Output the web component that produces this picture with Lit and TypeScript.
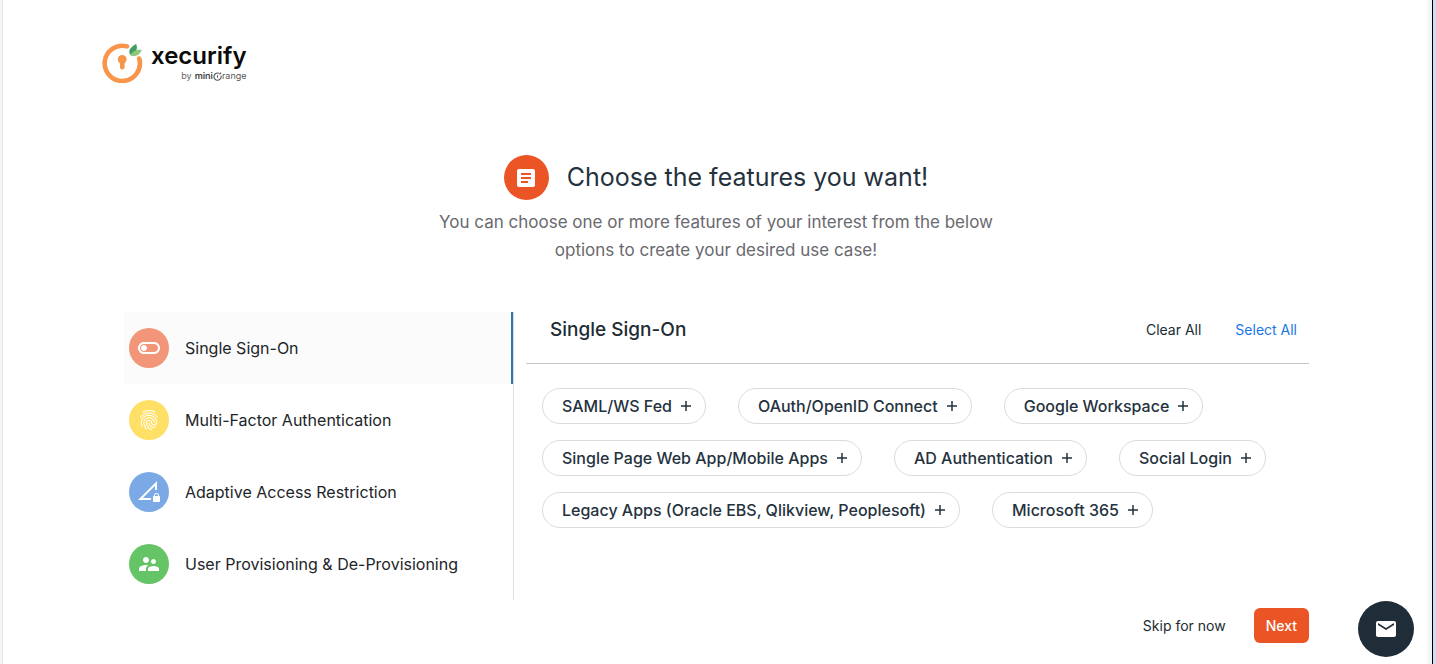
import { LitElement, html, svg, css } from "lit";
import { customElement, property, state } from "lit/decorators.js";

const icons = {
  toggle: svg`<path d="M17 6H7c-3.31 0-6 2.69-6 6s2.69 6 6 6h10c3.31 0 6-2.69 6-6s-2.69-6-6-6zm0 10H7c-2.21 0-4-1.79-4-4s1.790-4 4-4h10c2.210 0 4 1.790 4 4s-1.790 4-4 4zM7 9c-1.660 0-3 1.340-3 3s1.340 3 3 3 3-1.340 3-3-1.340-3-3-3z"/>`,
  fingerprint: svg`<path d="M17.81 4.47c-.08 0-.16-.02-.23-.06C15.66 3.42 14 3 12.01 3c-1.98 0-3.86.47-5.57 1.41-.24.13-.54.04-.68-.2-.13-.24-.04-.55.2-.68C7.82 2.52 9.86 2 12.01 2c2.13 0 3.99.47 6.03 1.52.25.13.34.43.21.67-.09.18-.26.28-.44.28zM3.5 9.72c-.1 0-.2-.03-.29-.09-.23-.16-.28-.47-.12-.7.99-1.4 2.25-2.5 3.75-3.27C9.98 4.04 14 4.03 17.15 5.65c1.5.77 2.76 1.86 3.75 3.25.16.22.11.54-.12.7-.23.16-.54.11-.7-.12-.9-1.26-2.04-2.25-3.39-2.94-2.87-1.47-6.54-1.47-9.4.01-1.36.7-2.5 1.7-3.4 2.96-.08.14-.23.21-.39.21zm6.25 12.07c-.13 0-.26-.05-.35-.15-.87-.87-1.34-1.43-2.01-2.64-.69-1.23-1.05-2.73-1.05-4.34 0-2.97 2.54-5.39 5.66-5.39s5.66 2.42 5.66 5.39c0 .28-.22.5-.5.5s-.5-.22-.5-.5c0-2.42-2.09-4.39-4.66-4.39-2.57 0-4.66 1.97-4.66 4.39 0 1.44.32 2.77.93 3.85.64 1.15 1.08 1.64 1.85 2.42.19.2.19.51 0 .71-.11.1-.24.15-.37.15zm7.17-1.85c-1.19 0-2.24-.3-3.1-.89-1.49-1.01-2.38-2.65-2.38-4.39 0-.28.22-.5.5-.5s.5.22.5.5c0 1.41.72 2.74 1.94 3.56.71.48 1.54.71 2.54.71.24 0 .64-.03 1.04-.1.27-.05.53.13.58.41.05.27-.13.53-.41.58-.57.11-1.07.12-1.21.12zM14.91 22c-.04 0-.09-.01-.13-.02-1.59-.44-2.63-1.03-3.72-2.1-1.4-1.39-2.17-3.24-2.17-5.22 0-1.62 1.38-2.94 3.08-2.94 1.7 0 3.08 1.32 3.08 2.94 0 1.07.93 1.94 2.08 1.94s2.08-.87 2.08-1.94c0-3.77-3.25-6.83-7.25-6.83-2.84 0-5.44 1.58-6.61 4.03-.39.81-.59 1.76-.59 2.8 0 .78.07 2.01.67 3.61.1.26-.03.55-.29.64-.26.1-.55-.04-.64-.29-.49-1.31-.73-2.61-.73-3.96 0-1.2.23-2.29.68-3.24 1.33-2.79 4.28-4.6 7.51-4.6 4.55 0 8.25 3.51 8.25 7.83 0 1.62-1.38 2.94-3.08 2.94s-3.08-1.32-3.08-2.94c0-1.07-.93-1.94-2.08-1.94s-2.08.87-2.08 1.94c0 1.71.66 3.31 1.87 4.51.95.94 1.86 1.46 3.27 1.85.27.07.42.35.35.61-.05.23-.26.38-.47.38z"/>`,
  networkLock: svg`<path d="M19.5 10c.17 0 .33.03.5.05V1L1 20h13v-2H5.830L18 5.830v4.450c.48-.18.98-.28 1.500-.28zM22 16v-.500c0-1.380-1.120-2.500-2.500-2.500S17 14.120 17 15.500v.500c-.550 0-1 .450-1 1v4c0 .550.450 1 1 1h5c.550 0 1-.450 1-1v-4c0-.550-.450-1-1-1zm-1 0h-3v-.500c0-.830.670-1.500 1.500-1.500s1.500.670 1.500 1.500v.500z"/>`,
  people: svg`<path d="M16.500 12c1.380 0 2.490-1.120 2.490-2.500S17.880 7 16.500 7 14 8.120 14 9.500s1.120 2.500 2.500 2.500zM9 11c1.660 0 2.990-1.340 2.990-3S10.660 5 9 5 6 6.340 6 8s1.340 3 3 3zm7.500 3c-1.830 0-5.500.920-5.500 2.750V19h11v-2.250c0-1.830-3.670-2.750-5.500-2.750zM9 13c-2.330 0-7 1.170-7 3.500V19h7v-2.250c0-.850.330-2.340 2.370-3.470C10.500 13.100 9.660 13 9 13z"/>`,
  article: svg`<path d="M19 3H5c-1.100 0-2 .900-2 2v14c0 1.100.900 2 2 2h14c1.100 0 2-.900 2-2V5c0-1.100-.900-2-2-2zm-5 14H7v-2h7v2zm3-4H7v-2h10v2zm0-4H7V7h10v2z"/>`,
  mail: svg`<path d="M20 4H4c-1.100 0-1.990.900-1.990 2L2 18c0 1.100.900 2 2 2h16c1.100 0 2-.900 2-2V6c0-1.100-.900-2-2-2zm0 4l-8 5-8-5V6l8 5 8-5v2z"/>`,
};

interface Feature {
  label: string;
  tone: string;
  icon: unknown;
  options: string[];
}

const features: Feature[] = [
  {
    label: "Single Sign-On",
    tone: "coral",
    icon: icons.toggle,
    options: [
      "SAML/WS Fed",
      "OAuth/OpenID Connect",
      "Google Workspace",
      "Single Page Web App/Mobile Apps",
      "AD Authentication",
      "Social Login",
      "Legacy Apps (Oracle EBS, Qlikview, Peoplesoft)",
      "Microsoft 365",
    ],
  },
  { label: "Multi-Factor Authentication", tone: "yellow", icon: icons.fingerprint, options: [] },
  { label: "Adaptive Access Restriction", tone: "blue", icon: icons.networkLock, options: [] },
  { label: "User Provisioning & De-Provisioning", tone: "green", icon: icons.people, options: [] },
];

@customElement("brand-logo")
class BrandLogo extends LitElement {
  static styles = css`
    :host {
      display: flex;
      gap: 8px;
      align-items: flex-start;
    }
    .mark {
      width: 41px;
      height: 42px;
    }
    .words {
      display: flex;
      flex-direction: column;
      align-items: flex-end;
      padding-top: 1px;
    }
    .name {
      font: 600 24px/28px "Inter", sans-serif;
      color: #0b0b0b;
    }
    .by {
      display: flex;
      align-items: center;
      font: 400 9px/12px "Inter", sans-serif;
      color: #666;
    }
    .mini {
      margin-left: 3px;
      font-weight: 600;
      color: #444;
    }
    .ring {
      width: 9px;
      height: 9px;
    }
    .range {
      font-weight: 400;
      color: #555;
    }
  `;
  render() {
    return html`
      <svg class="mark" viewBox="0 0 41 42" aria-hidden="true">
        <path d="M25 5.400A17.600 17.600 0 1 0 37.200 17.500" fill="none" stroke="#f7954a" stroke-width="4.600" stroke-linecap="round" />
        <circle cx="20.200" cy="18.300" r="4.400" fill="#f7954a" />
        <path d="M18 20h4.600v6.300a2.300 2.300 0 0 1-4.600 0z" fill="#f7954a" />
        <path d="M28.200 13.800C25.500 9 29 5.800 34.200 3C36.200 8.500 33.700 12.800 28.200 13.800z" fill="#3f9d63" />
        <path d="M28.500 14.600C30.500 10.500 34 8.200 39.800 9C37.300 14.500 33 16.400 28.500 14.600z" fill="#8cc878" />
      </svg>
      <div class="words">
        <span class="name">xecurify</span>
        <span class="by">
          by<span class="mini">mini</span>
          <svg class="ring" viewBox="0 0 10 10" role="img" aria-label="O">
            <path d="M6.500 1.400A4 4 0 1 0 8.900 4M5 3.500v3M7 2.500L9 .8" fill="none" stroke="#555" stroke-width="1.200" />
          </svg>
          <span class="range">range</span>
        </span>
      </div>
    `;
  }
}

@customElement("option-chip")
class OptionChip extends LitElement {
  @property() label = "";
  @property({ type: Boolean }) selected = false;
  static styles = css`
    :host {
      display: block;
    }
    .chip {
      display: flex;
      align-items: center;
      gap: 8px;
      height: 36px;
      padding: 0 13px 1px 19px;
      border: 1px solid #d9dbdd;
      border-radius: 18px;
      background: #fff;
      color: #25323e;
      font: 500 16px/20px "Inter", sans-serif;
      white-space: nowrap;
      cursor: pointer;
    }
    .chip[aria-pressed="true"] {
      border-color: #eb5424;
    }
    .plus {
      width: 12px;
      height: 12px;
      fill: none;
      stroke: #25323e;
      stroke-width: 1.500;
    }
  `;
  render() {
    return html`
      <button class="chip" type="button" aria-pressed=${this.selected ? "true" : "false"}>
        ${this.label}
        <svg class="plus" viewBox="0 0 12 12" aria-hidden="true"><path d="M6 1v10M1 6h10" /></svg>
      </button>
    `;
  }
}

@customElement("app-root")
class AppRoot extends LitElement {
  @state() private active = 0;
  @state() private chosen: string[] = [];

  static styles = css`
    * {
      box-sizing: border-box;
    }
    :host {
      display: block;
      min-height: 100vh;
      box-sizing: border-box;
      padding-left: 2px;
      border-right: 3px solid #d3def6;
      background: #f4f5f7;
      font-family: "Inter", sans-serif;
      color: #212b33;
    }
    .outer {
      min-height: 100vh;
      padding-right: 4px;
      border-right: 1px solid #000;
    }
    .page {
      display: flex;
      flex-direction: column;
      min-height: 100vh;
      padding: 41px 119px 21px 99px;
      border-left: 1px solid #e8e8ea;
      background: #fff;
    }
    .intro {
      display: flex;
      flex-direction: column;
      align-items: center;
      margin-top: 72px;
      padding-left: 21px;
      text-align: center;
    }
    .title {
      display: flex;
      align-items: center;
      gap: 18px;
    }
    h1 {
      margin: 0;
      padding-bottom: 2px;
      font-size: 25px;
      font-weight: 400;
      line-height: 32px;
      color: #25323e;
    }
    .badge {
      display: grid;
      place-items: center;
      flex: none;
      width: 40px;
      height: 40px;
      border-radius: 50%;
      fill: #fff;
    }
    .badge svg {
      width: 24px;
      height: 24px;
    }
    .orange {
      width: 45px;
      height: 45px;
      background: #eb5424;
    }
    .coral {
      background: #f29578;
    }
    .yellow {
      background: #ffe066;
    }
    .blue {
      background: #7ba9e6;
    }
    .green {
      background: #64c466;
    }
    .lead {
      max-width: 600px;
      margin: 8px 0 0;
      font-size: 17px;
      line-height: 28px;
      color: #69696f;
    }
    .picker {
      display: grid;
      grid-template-columns: 390px 1fr;
      gap: 12px;
      margin-top: 48px;
      padding-left: 22px;
    }
    .tabs {
      display: flex;
      flex-direction: column;
      border-right: 1px solid #dfdfdf;
    }
    .tab {
      display: flex;
      align-items: center;
      gap: 16px;
      height: 72px;
      padding: 0 5px;
      border: 0;
      border-right: 2px solid transparent;
      background: none;
      color: #212529;
      font: 400 16px/24px "Inter", sans-serif;
      cursor: pointer;
    }
    .tab[aria-selected="true"] {
      border-right-color: #2e74b5;
      background: #fbfbfb;
    }
    .head {
      display: flex;
      align-items: center;
      gap: 34px;
      height: 52px;
      padding: 0 12px 16px 24px;
      border-bottom: 1px solid #c6c6c6;
    }
    h2 {
      flex: 1;
      margin: 0;
      font-size: 19px;
      font-weight: 500;
      line-height: 28px;
    }
    .text {
      padding: 0;
      border: 0;
      background: none;
      color: #212b33;
      font: 400 14px/20px "Inter", sans-serif;
      cursor: pointer;
    }
    .link {
      color: #1877e8;
    }
    .chips {
      display: flex;
      flex-wrap: wrap;
      gap: 16px 32px;
      padding: 24px 16px;
    }
    .actions {
      display: flex;
      justify-content: flex-end;
      align-items: center;
      gap: 28px;
      margin-top: 8px;
    }
    .next {
      height: 35px;
      padding: 0 12px;
      border: 0;
      border-radius: 6px;
      background: #eb5424;
      color: #fff;
      font: 500 14px/20px "Inter", sans-serif;
      cursor: pointer;
    }
    .mail {
      position: fixed;
      right: 22px;
      bottom: 7px;
      display: grid;
      place-items: center;
      width: 56px;
      height: 56px;
      padding: 0;
      border: 0;
      border-radius: 50%;
      background: #1f2d38;
      fill: #fff;
      cursor: pointer;
    }
    .mail svg {
      width: 24px;
      height: 24px;
    }
  `;

  private toggle(option: string) {
    this.chosen = this.chosen.includes(option)
      ? this.chosen.filter((o) => o !== option)
      : [...this.chosen, option];
  }

  render() {
    const current = features[this.active];
    return html`
      <div class="outer">
        <main class="page">
          <brand-logo></brand-logo>
          <header class="intro">
            <div class="title">
              <span class="badge orange"><svg viewBox="0 0 24 24" aria-hidden="true">${icons.article}</svg></span>
              <h1>Choose the features you want!</h1>
            </div>
            <p class="lead">
              You can choose one or more features of your interest from the below<br />options to create your desired use case!
            </p>
          </header>
          <section class="picker">
            <div class="tabs" role="tablist">
              ${features.map(
                (f, i) => html`
                  <button class="tab" type="button" role="tab" aria-selected=${i === this.active ? "true" : "false"} @click=${() => (this.active = i)}>
                    <span class="badge ${f.tone}"><svg viewBox="0 0 24 24" aria-hidden="true">${f.icon}</svg></span>
                    ${f.label}
                  </button>
                `
              )}
            </div>
            <div role="tabpanel">
              <div class="head">
                <h2>${current.label}</h2>
                <button class="text" type="button" @click=${() => (this.chosen = [])}>Clear All</button>
                <button class="text link" type="button" @click=${() => (this.chosen = [...current.options])}>Select All</button>
              </div>
              <div class="chips">
                ${current.options.map(
                  (o) => html`<option-chip .label=${o} ?selected=${this.chosen.includes(o)} @click=${() => this.toggle(o)}></option-chip>`
                )}
              </div>
            </div>
          </section>
          <footer class="actions">
            <button class="text" type="button">Skip for now</button>
            <button class="next" type="button">Next</button>
          </footer>
        </main>
      </div>
      <button class="mail" type="button" aria-label="Contact us"><svg viewBox="0 0 24 24" aria-hidden="true">${icons.mail}</svg></button>
    `;
  }
}
